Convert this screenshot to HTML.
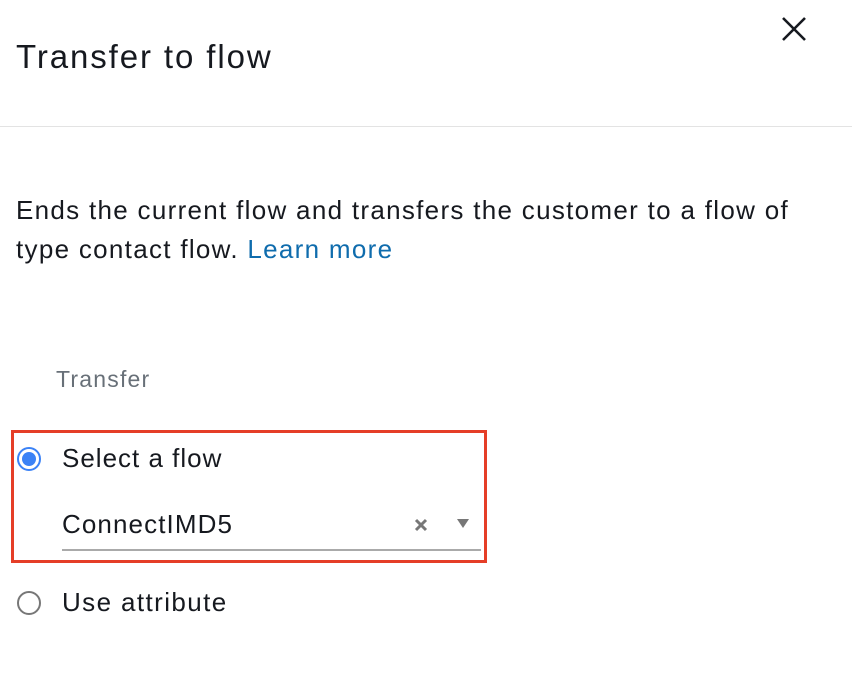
<!DOCTYPE html>
<html><head><style>
body{margin:0;width:852px;height:684px;background:#fff;font-family:"Liberation Sans",sans-serif;color:#16191f;position:relative;overflow:hidden}
.a{position:absolute;white-space:nowrap}
</style></head><body>
<div class="a" style="left:16px;top:38px;font-size:33px;letter-spacing:1.9px">Transfer to flow</div>
<svg class="a" style="left:780px;top:15px" width="28" height="28"><path d="M3 3L25 25M25 3L3 25" stroke="#16191f" stroke-width="2.6"/></svg>
<div class="a" style="left:0;top:126px;width:852px;height:1px;background:#e3e3e3"></div>
<div class="a" style="left:16px;top:191px;font-size:26px;line-height:39px;letter-spacing:1.3px">Ends the current flow and transfers the customer to a flow of<br>type contact flow. <span style="color:#0f6cad">Learn more</span></div>
<div class="a" style="left:56px;top:366px;font-size:23px;color:#687078;letter-spacing:1.2px">Transfer</div>
<div class="a" style="left:11px;top:430px;width:470px;height:127px;border:3px solid #e53e27"></div>
<svg class="a" style="left:16px;top:446px" width="28" height="28"><circle cx="13" cy="13" r="11" fill="none" stroke="#3b82f6" stroke-width="2"/><circle cx="13" cy="13" r="7" fill="#3b82f6"/></svg>
<div class="a" style="left:62px;top:443px;font-size:26px;letter-spacing:1px">Select a flow</div>
<div class="a" style="left:62px;top:509px;font-size:26px;letter-spacing:1.1px">ConnectIMD5</div>
<svg class="a" style="left:413px;top:517px" width="16" height="16"><path d="M3 3L13 13M13 3L3 13" stroke="#777" stroke-width="3"/></svg>
<svg class="a" style="left:456px;top:518px" width="14" height="12"><path d="M1 1L13 1L7 10Z" fill="#777"/></svg>
<div class="a" style="left:62px;top:549px;width:419px;height:2px;background:#aaa"></div>
<svg class="a" style="left:16px;top:590px" width="28" height="28"><circle cx="13" cy="13" r="11" fill="none" stroke="#777" stroke-width="2"/></svg>
<div class="a" style="left:62px;top:587px;font-size:26px;letter-spacing:1.4px">Use attribute</div>
</body></html>
